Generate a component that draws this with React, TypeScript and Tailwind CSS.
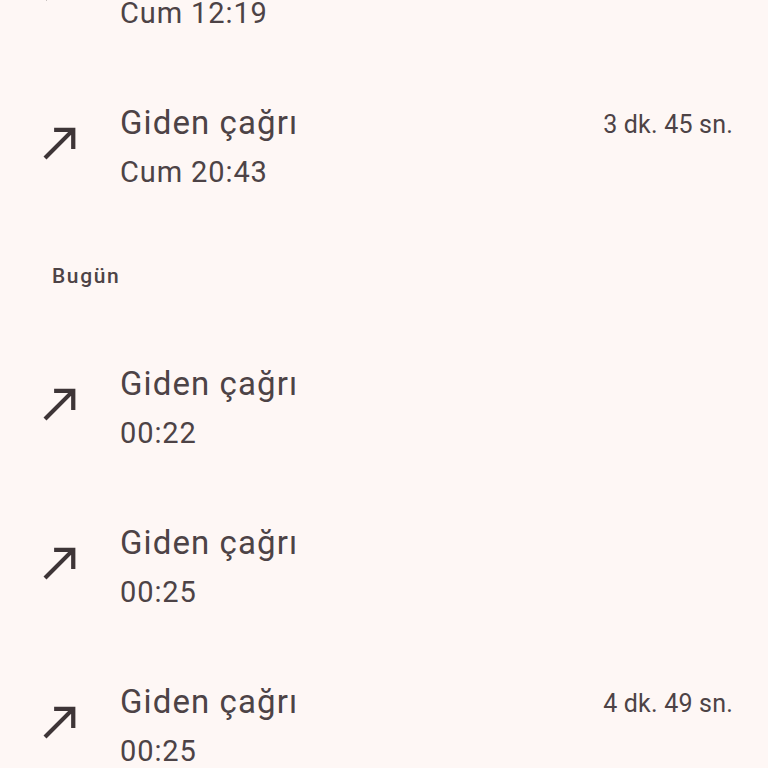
const calls = [
  { day: "", time: "Cum 12:19", duration: "" },
  { day: "", time: "Cum 20:43", duration: "3 dk. 45 sn." },
  { day: "Bugün", time: "00:22", duration: "" },
  { day: "", time: "00:25", duration: "" },
  { day: "", time: "00:25", duration: "4 dk. 49 sn." },
];

const OutgoingIcon = () => (
  <svg viewBox="0 0 24 24" className="w-[51px] h-[51px] shrink-0 mb-[8px]" fill="#3e3537">
    <path d="M9 5v2h6.59L4 18.59 5.41 20 17 8.41V15h2V5z" />
  </svg>
);

const CallRow = ({ time, duration }: { time: string; duration: string }) => (
  <div className="flex items-center pl-[35px] pr-[35px] py-[34px]">
    <OutgoingIcon />
    <div className="ml-[34px] flex-1 flex flex-col">
      <div className="flex justify-between h-[44px]">
        <span className="text-[33px] leading-[44px] tracking-[1.1px] text-[#4d4346]">Giden çağrı</span>
        {duration && (
          <span className="text-[25px] leading-[48px] tracking-[0.2px] text-[#4d4346]">{duration}</span>
        )}
      </div>
      <span className="mt-[7px] text-[29px] leading-[40px] tracking-[0.9px] text-[#4d4346]">{time}</span>
    </div>
  </div>
);

export default function App() {
  return (
    <div
      className="w-[768px] h-[768px] overflow-hidden bg-[#fef7f5]"
      style={{ fontFamily: "Roboto, 'Noto Sans', sans-serif" }}
    >
      <div className="mt-[-92px]">
        {calls.map((c, i) => (
          <div key={i}>
            {c.day && (
              <div className="pl-[52px] pt-[38px] pb-[40px] text-[21px] leading-[24px] tracking-[1.6px] font-medium text-[#4d4346]">
                {c.day}
              </div>
            )}
            <CallRow time={c.time} duration={c.duration} />
          </div>
        ))}
      </div>
    </div>
  );
}
